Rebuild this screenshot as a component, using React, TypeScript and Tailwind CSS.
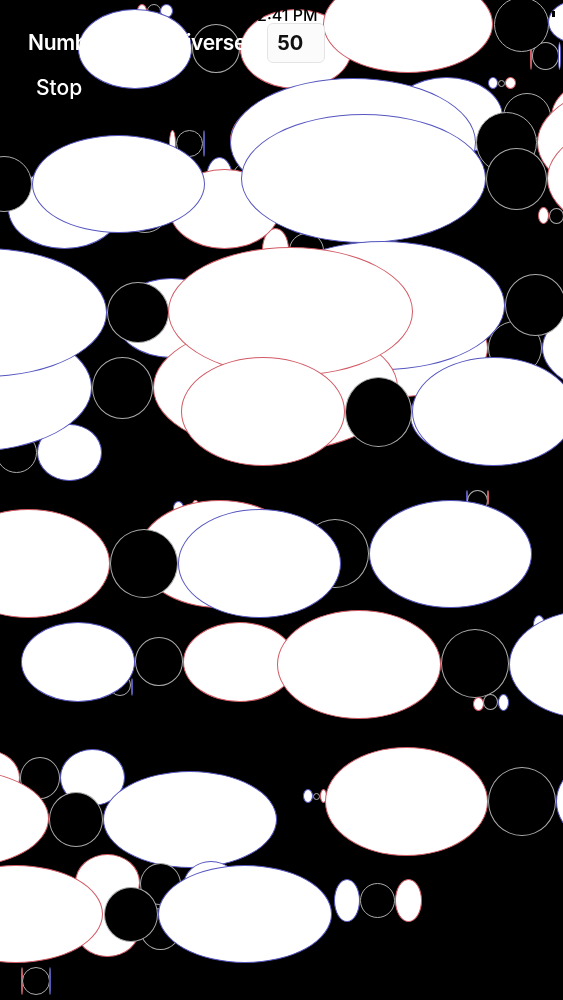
import React from "react";

type Kind = "b" | "r" | "c" | "w";
type Shape = [Kind, number, number, number, number];

const kindClass: Record<Kind, string> = {
  b: "bg-white border-[#5656c0]",
  r: "bg-white border-[#d25a64]",
  c: "bg-black border-[#ababab]",
  w: "bg-white border-white",
};

// Every shape is a body on a free canvas, listed from the bottom layer up.
const shapes: Shape[] = [
  ["r", 137, 4, 10, 14], ["c", 147, 4, 14, 14], ["b", 160, 4, 13, 14],
  ["r", 169, 130, 7, 27], ["c", 176, 130, 27, 27], ["b", 203, 130, 2, 27],
  ["b", 78, 9, 114, 80], ["c", 192, 24, 48, 49], ["r", 240, 9, 112, 80],
  ["r", 530, 41, 2, 29], ["c", 532, 42, 27, 28], ["b", 558, 42, 3, 28],
  ["r", 323, -25, 170, 98], ["c", 494, -3, 55, 55], ["b", 548, 0, 60, 44],
  ["b", 488, 77, 10, 12], ["c", 498, 80, 7, 7], ["r", 505, 77, 11, 12],
  ["r", 538, 207, 11, 17], ["c", 549, 208, 15, 16],
  ["b", 206, 157, 27, 43], ["c", 232, 161, 35, 35],
  ["r", 262, 228, 27, 43], ["c", 289, 233, 35, 35],
  ["b", 8, 169, 113, 80], ["c", 121, 185, 48, 48], ["r", 169, 169, 111, 80],
  ["c", -24, 156, 56, 56], ["b", 32, 135, 173, 98],
  ["b", 390, 77, 113, 80], ["c", 503, 93, 48, 48], ["r", 551, 77, 113, 80],
  ["r", 230, 100, 113, 80],
  ["b", 230, 78, 246, 129], ["c", 476, 112, 61, 61], ["r", 537, 78, 246, 129],
  ["b", 241, 114, 245, 129], ["c", 486, 148, 61, 62], ["r", 547, 114, 245, 129],
  ["b", 115, 278, 113, 80],
  ["r", 314, 299, 174, 98], ["c", 488, 321, 54, 54], ["b", 542, 299, 174, 98],
  ["b", 410, 375, 113, 80],
  ["b", 260, 241, 245, 129], ["c", 505, 274, 61, 62],
  ["c", -4, 432, 41, 41], ["b", 37, 424, 65, 57],
  ["b", -153, 323, 245, 129], ["c", 92, 357, 61, 62], ["r", 153, 323, 245, 129],
  ["b", -138, 248, 245, 129], ["c", 107, 282, 62, 61], ["r", 168, 247, 245, 129],
  ["r", 181, 357, 164, 109], ["c", 345, 377, 67, 70], ["b", 412, 357, 163, 109],
  ["b", 466, 490, 2, 15], ["c", 467, 490, 21, 22], ["r", 487, 490, 2, 15],
  ["b", 173, 501, 11, 14], ["r", 192, 500, 7, 10],
  ["r", 138, 500, 163, 108], ["c", 301, 519, 68, 69], ["b", 369, 500, 163, 108],
  ["r", -53, 509, 163, 109], ["c", 110, 529, 68, 69], ["b", 178, 509, 163, 109],
  ["c", 109, 674, 22, 22], ["b", 131, 678, 2, 18],
  ["b", 21, 622, 114, 80], ["c", 135, 637, 48, 49], ["r", 183, 622, 113, 80],
  ["b", 533, 615, 12, 20],
  ["r", 277, 610, 164, 109], ["c", 441, 629, 68, 69], ["b", 509, 610, 163, 109],
  ["r", 473, 697, 11, 14], ["c", 483, 694, 15, 16], ["b", 498, 694, 11, 17],
  ["r", -45, 750, 65, 56], ["c", 20, 757, 40, 42], ["b", 60, 749, 65, 57],
  ["r", -125, 770, 174, 97], ["c", 49, 792, 54, 55], ["b", 103, 771, 174, 97],
  ["b", 303, 789, 10, 14], ["c", 313, 793, 7, 7], ["r", 320, 789, 7, 14],
  ["r", 325, 747, 163, 109], ["c", 488, 767, 68, 69], ["b", 556, 747, 163, 109],
  ["r", 75, 854, 65, 57], ["r", 75, 900, 65, 57], ["w", 85, 870, 45, 60],
  ["c", 140, 863, 41, 42], ["b", 183, 861, 56, 50],
  ["c", 140, 908, 41, 42],
  ["r", -71, 865, 174, 98], ["c", 104, 887, 54, 55], ["b", 158, 865, 174, 98],
  ["b", 334, 879, 26, 43], ["c", 360, 883, 35, 35], ["r", 395, 879, 27, 43],
  ["r", 21, 967, 2, 28], ["c", 22, 967, 28, 28], ["b", 49, 967, 2, 28],
];

export default function App() {
  return (
    <div className="relative h-[1000px] w-full overflow-hidden bg-black font-['Inter',sans-serif]">
      <div className="absolute inset-0 blur-[0.4px]">
        {shapes.map(([kind, left, top, width, height], i) => (
          <div
            key={i}
            className={`absolute box-border rounded-[50%] border ${kindClass[kind]}`}
            style={{ left, top, width, height }}
          />
        ))}
      </div>

      <div className="absolute inset-x-0 top-0 flex flex-col">
        <div className="flex h-[23px] items-center justify-center pl-[5px] pt-[7px] text-[16px] font-medium leading-none text-black">
          12:41 PM
        </div>
        <div className="flex h-[40px] items-center pl-7">
          <span className="w-[239px] whitespace-nowrap text-[21px] font-semibold tracking-[-0.3px] text-white [word-spacing:2px]">
            Number of multiverses
          </span>
          <input
            readOnly
            value="50"
            className="box-border h-[40px] w-[58px] rounded-md border border-[#e4e4e4] bg-[#fbfbfb] pl-[9px] text-[20px] font-bold text-[#111111] outline-none"
          />
        </div>
        <button className="ml-9 mt-[13px] h-6 w-fit text-[21px] font-medium leading-6 text-white">
          Stop
        </button>
      </div>

      <div className="absolute left-[552px] top-[11px] h-[6px] w-[3px] bg-black" />
    </div>
  );
}
